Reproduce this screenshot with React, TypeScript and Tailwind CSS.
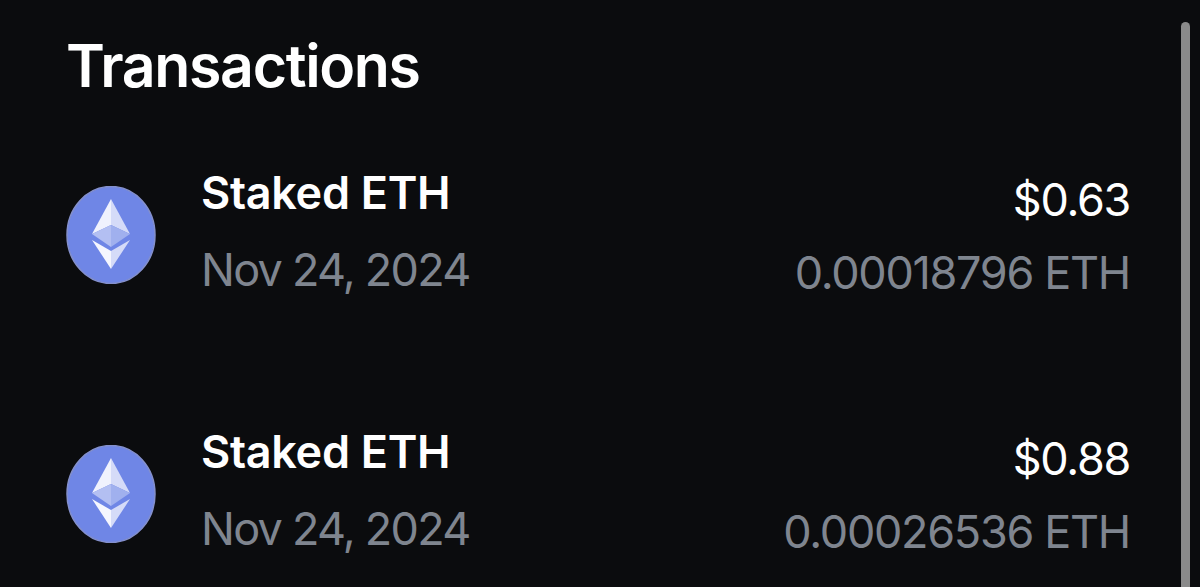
import React from 'react';

const rows = [
  { usd: '$0.63', eth: '0.00018796 ETH' },
  { usd: '$0.88', eth: '0.00026536 ETH' },
];

function EthIcon() {
  return (
    <svg width="90" height="98" viewBox="0 0 90 98" className="shrink-0">
      <ellipse cx="45" cy="49" rx="44" ry="48.5" fill="#6F86E6" stroke="#8490CC" strokeWidth="1.5" />
      <polygon points="45,13 26,48 45,39" fill="#F0F2FD" />
      <polygon points="45,13 64,48 45,39" fill="#D5DBF8" />
      <polygon points="26,48 45,39 45,61" fill="#B3BFF2" />
      <polygon points="64,48 45,39 45,61" fill="#A0B0EE" />
      <polygon points="26,54 45,65 45,83" fill="#F5F6FE" />
      <polygon points="64,54 45,65 45,83" fill="#D5DBF8" />
    </svg>
  );
}

export default function App() {
  return (
    <div className="relative h-[587px] w-[1200px] overflow-hidden bg-[#0B0C0E] pl-[66px] pr-[70px] font-['Inter','Liberation_Sans',sans-serif]">
      <h1 className="pt-[33px] text-[59px] leading-[65px] font-semibold tracking-[-1.35px] text-white">Transactions</h1>
      <div className="mt-[88px] flex flex-col gap-[161px]">
        {rows.map((r, i) => (
          <div key={i} className="flex h-[98px] items-center">
            <EthIcon />
            <div className="mb-[7px] ml-[45px] flex flex-col gap-[25px]">
              <span className="text-[45px] leading-[52px] font-semibold tracking-[-0.3px] text-white">Staked ETH</span>
              <span className="text-[45px] leading-[52px] tracking-[-1.75px] text-[#7F858F]">Nov 24, 2024</span>
            </div>
            <div className="mt-[3px] ml-auto flex flex-col items-end gap-[21px]">
              <span className="text-[45px] leading-[52px] tracking-[-1.3px] text-white">{r.usd}</span>
              <span className="text-[45px] leading-[52px] tracking-[-1.3px] text-[#7F858F]">{r.eth}</span>
            </div>
          </div>
        ))}
      </div>
      <div className="absolute top-[22px] right-[10px] h-[565px] w-[9px] rounded-t-full bg-[#8A8A8A]" />
    </div>
  );
}
